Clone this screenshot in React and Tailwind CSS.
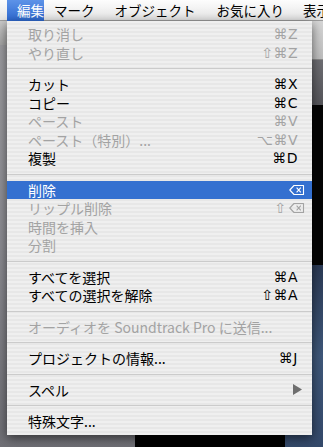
import React from "react";

const DeleteKey = ({ color }) => (
  <svg width="16" height="12" viewBox="0 0 16 12" fill="none" stroke={color} strokeWidth="1.1">
    <path d="M5 1.5 H14.5 V10.5 H5 L0.8 6 Z" strokeLinejoin="round" />
    <path d="M7.6 3.6 L11.8 8.4 M11.8 3.6 L7.6 8.4" />
  </svg>
);

const items = [
  { label: "取り消し", key: "⌘Z", off: true },
  { label: "やり直し", key: "⇧⌘Z", off: true },
  "sep",
  { label: "カット", key: "⌘X" },
  { label: "コピー", key: "⌘C" },
  { label: "ペースト", key: "⌘V", off: true },
  { label: "ペースト（特別）...", key: "⌥⌘V", off: true },
  { label: "複製", key: "⌘D" },
  "sep",
  { label: "削除", del: true, active: true },
  { label: "リップル削除", del: true, shift: true, off: true },
  { label: "時間を挿入", off: true },
  { label: "分割", off: true },
  "sep",
  { label: "すべてを選択", key: "⌘A" },
  { label: "すべての選択を解除", key: "⇧⌘A" },
  "sep",
  { label: "オーディオを Soundtrack Pro に送信...", off: true },
  "sep",
  { label: "プロジェクトの情報...", key: "⌘J" },
  "sep",
  { label: "スペル", sub: true },
  "sep",
  { label: "特殊文字..." },
];

const MenuRow = ({ item }) => {
  const color = item.active ? "text-white" : item.off ? "text-[#a3a3a3]" : "text-black";
  const iconColor = item.active ? "#ffffff" : item.off ? "#a3a3a3" : "#000000";
  return (
    <div
      className={`flex items-center justify-between h-[18.5px] leading-[18px] pl-[21px] pr-[14px] ${color} ${
        item.active ? "bg-[#3470d0]" : ""
      }`}
    >
      <span>{item.label}</span>
      {item.key && <span className="font-['DejaVu_Sans',sans-serif] text-[14px] tracking-[0.5px]">{item.key}</span>}
      {item.del && (
        <span className="flex items-center gap-[3px] mr-[-7px]">
          {item.shift && <span className="font-['DejaVu_Sans',sans-serif] text-[14px]">⇧</span>}
          <DeleteKey color={iconColor} />
        </span>
      )}
      {item.sub && (
        <svg width="9" height="11" viewBox="0 0 9 11" className="mr-[-4px]">
          <path d="M0 0 L9 5.5 L0 11 Z" fill="#6e6e6e" />
        </svg>
      )}
    </div>
  );
};

export default function App() {
  return (
    <div className="relative w-[323px] h-[447px] overflow-hidden font-['Noto_Sans_CJK_JP','DejaVu_Sans',sans-serif] text-[14px]">
      <div className="flex h-[21px] leading-[21px] text-[13.5px] whitespace-nowrap bg-gradient-to-b from-[#fdfdfd] via-[#f1f1f1] to-[#e3e3e3] border-b border-[#9c9c9c] text-black">
        <div className="ml-[7px] h-[21px] w-[46px] pl-[10px] bg-gradient-to-b from-[#5d93e8] to-[#2d68cf] text-white">
          編集
        </div>
        <div className="ml-[10px] h-[20px]">マーク</div>
        <div className="ml-[20px] h-[20px]">オブジェクト</div>
        <div className="ml-[21px] h-[20px]">お気に入り</div>
        <div className="ml-[19px] h-[20px]">表示</div>
      </div>

      <div className="flex h-[426px]">
        <div className="w-[135px] flex flex-col">
          <div className="h-[24px] bg-gradient-to-b from-[#c9c9c9] to-[#a4a4a4]" />
          <div className="flex-1 bg-gradient-to-b from-[#9c9ca0] via-[#8c8c92] to-[#6f6f75]" />
        </div>
        <div className="w-[150px] flex flex-col">
          <div className="h-[84px] bg-[#a9a9a9]" />
          <div className="flex-1 bg-black" />
        </div>
        <div className="flex-1 flex flex-col">
          <div className="h-[39px] bg-gradient-to-b from-[#d6d6d6] to-[#bdbdbd] border-b border-[#8a8a8a]" />
          <div className="h-[45px] bg-gradient-to-b from-[#6d6d72] to-[#55555a]" />
          <div className="h-[160px] bg-[#050505]" />
          <div className="flex-1 bg-gradient-to-b from-[#2b3a55] via-[#3e5779] to-[#34496a]" />
        </div>
      </div>

      <div className="absolute left-[7px] top-[21px] w-[305px] py-[4px] shadow-[0_3px_10px_rgba(0,0,0,0.55)] bg-[repeating-linear-gradient(to_bottom,#efefef_0px,#efefef_2px,#e7e7e7_2px,#e7e7e7_4px)]">
        {items.map((item, i) =>
          item === "sep" ? (
            <div key={i} className="h-[13px] flex items-center">
              <div className="h-px w-full bg-[#cbcbcb]" />
            </div>
          ) : (
            <MenuRow key={i} item={item} />
          )
        )}
      </div>
    </div>
  );
}
